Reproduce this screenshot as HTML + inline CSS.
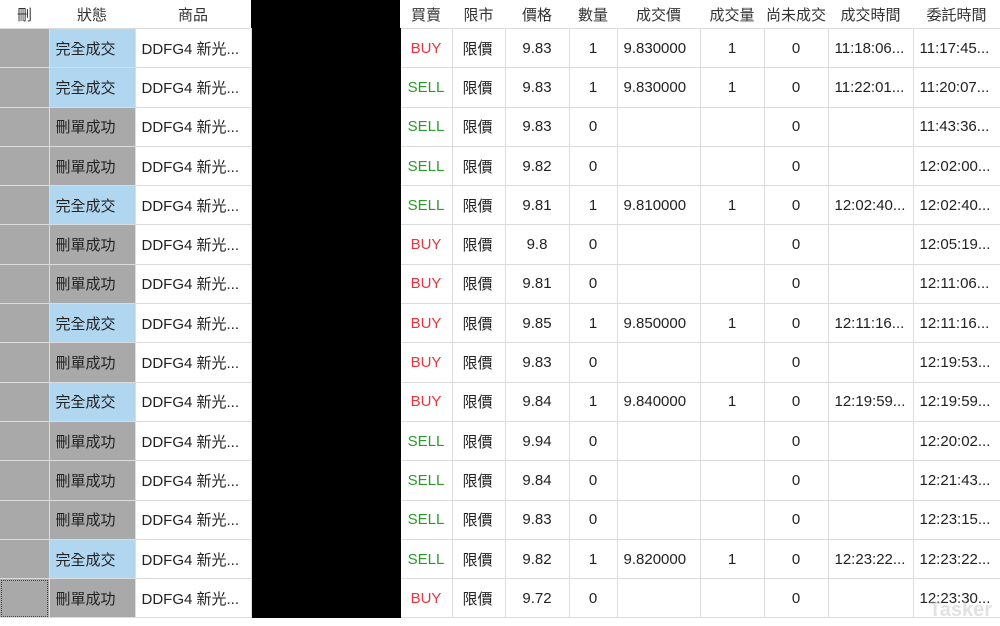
<!DOCTYPE html>
<html><head><meta charset="utf-8"><style>
body{margin:0;width:1000px;height:626px;overflow:hidden;background:#fff;font-family:"Liberation Sans","Noto Sans CJK TC",sans-serif;font-size:15px;color:#222;position:relative}
table{border-collapse:collapse;table-layout:fixed;position:absolute;left:0;top:0;width:1000px}
th{height:28px;font-weight:normal;text-align:center;padding:0;white-space:nowrap;overflow:hidden;color:#333;vertical-align:middle}
td{height:38.3px;border:1px solid #dcdcdc;padding:0 0 0 6px;white-space:nowrap;overflow:hidden;vertical-align:middle}
td.c{text-align:center;padding:0}
td.p{padding-left:10px}
td.g{background:#a9a9a9}
td.b{background:#b1d6f0}
td.k{background:#000;border-color:#000}
.buy{color:#f0303a}.sell{color:#2a9a2a}
tr td:first-child{border-left:none}
</style></head><body>
<table>
<colgroup><col style="width:49px"><col style="width:86px"><col style="width:116px"><col style="width:149px"><col style="width:52px"><col style="width:53px"><col style="width:64px"><col style="width:48px"><col style="width:83px"><col style="width:64px"><col style="width:64px"><col style="width:85px"><col style="width:87px"></colgroup>
<tr><th>刪</th><th>狀態</th><th>商品</th><th style="background:#000"></th><th>買賣</th><th>限市</th><th>價格</th><th>數量</th><th>成交價</th><th>成交量</th><th>尚未成交</th><th>成交時間</th><th>委託時間</th></tr>
<tr><td class="g"></td><td class="b">完全成交</td><td>DDFG4 新光...</td><td class="k"></td><td class="c buy">BUY</td><td class="p">限價</td><td class="c">9.83</td><td class="c">1</td><td>9.830000</td><td class="c">1</td><td class="c">0</td><td>11:18:06...</td><td>11:17:45...</td></tr>
<tr><td class="g"></td><td class="b">完全成交</td><td>DDFG4 新光...</td><td class="k"></td><td class="c sell">SELL</td><td class="p">限價</td><td class="c">9.83</td><td class="c">1</td><td>9.830000</td><td class="c">1</td><td class="c">0</td><td>11:22:01...</td><td>11:20:07...</td></tr>
<tr><td class="g"></td><td class="g">刪單成功</td><td>DDFG4 新光...</td><td class="k"></td><td class="c sell">SELL</td><td class="p">限價</td><td class="c">9.83</td><td class="c">0</td><td></td><td></td><td class="c">0</td><td></td><td>11:43:36...</td></tr>
<tr><td class="g"></td><td class="g">刪單成功</td><td>DDFG4 新光...</td><td class="k"></td><td class="c sell">SELL</td><td class="p">限價</td><td class="c">9.82</td><td class="c">0</td><td></td><td></td><td class="c">0</td><td></td><td>12:02:00...</td></tr>
<tr><td class="g"></td><td class="b">完全成交</td><td>DDFG4 新光...</td><td class="k"></td><td class="c sell">SELL</td><td class="p">限價</td><td class="c">9.81</td><td class="c">1</td><td>9.810000</td><td class="c">1</td><td class="c">0</td><td>12:02:40...</td><td>12:02:40...</td></tr>
<tr><td class="g"></td><td class="g">刪單成功</td><td>DDFG4 新光...</td><td class="k"></td><td class="c buy">BUY</td><td class="p">限價</td><td class="c">9.8</td><td class="c">0</td><td></td><td></td><td class="c">0</td><td></td><td>12:05:19...</td></tr>
<tr><td class="g"></td><td class="g">刪單成功</td><td>DDFG4 新光...</td><td class="k"></td><td class="c buy">BUY</td><td class="p">限價</td><td class="c">9.81</td><td class="c">0</td><td></td><td></td><td class="c">0</td><td></td><td>12:11:06...</td></tr>
<tr><td class="g"></td><td class="b">完全成交</td><td>DDFG4 新光...</td><td class="k"></td><td class="c buy">BUY</td><td class="p">限價</td><td class="c">9.85</td><td class="c">1</td><td>9.850000</td><td class="c">1</td><td class="c">0</td><td>12:11:16...</td><td>12:11:16...</td></tr>
<tr><td class="g"></td><td class="g">刪單成功</td><td>DDFG4 新光...</td><td class="k"></td><td class="c buy">BUY</td><td class="p">限價</td><td class="c">9.83</td><td class="c">0</td><td></td><td></td><td class="c">0</td><td></td><td>12:19:53...</td></tr>
<tr><td class="g"></td><td class="b">完全成交</td><td>DDFG4 新光...</td><td class="k"></td><td class="c buy">BUY</td><td class="p">限價</td><td class="c">9.84</td><td class="c">1</td><td>9.840000</td><td class="c">1</td><td class="c">0</td><td>12:19:59...</td><td>12:19:59...</td></tr>
<tr><td class="g"></td><td class="g">刪單成功</td><td>DDFG4 新光...</td><td class="k"></td><td class="c sell">SELL</td><td class="p">限價</td><td class="c">9.94</td><td class="c">0</td><td></td><td></td><td class="c">0</td><td></td><td>12:20:02...</td></tr>
<tr><td class="g"></td><td class="g">刪單成功</td><td>DDFG4 新光...</td><td class="k"></td><td class="c sell">SELL</td><td class="p">限價</td><td class="c">9.84</td><td class="c">0</td><td></td><td></td><td class="c">0</td><td></td><td>12:21:43...</td></tr>
<tr><td class="g"></td><td class="g">刪單成功</td><td>DDFG4 新光...</td><td class="k"></td><td class="c sell">SELL</td><td class="p">限價</td><td class="c">9.83</td><td class="c">0</td><td></td><td></td><td class="c">0</td><td></td><td>12:23:15...</td></tr>
<tr><td class="g"></td><td class="b">完全成交</td><td>DDFG4 新光...</td><td class="k"></td><td class="c sell">SELL</td><td class="p">限價</td><td class="c">9.82</td><td class="c">1</td><td>9.820000</td><td class="c">1</td><td class="c">0</td><td>12:23:22...</td><td>12:23:22...</td></tr>
<tr><td class="g" style="outline:1px dotted #444;outline-offset:-2px"></td><td class="g">刪單成功</td><td>DDFG4 新光...</td><td class="k"></td><td class="c buy">BUY</td><td class="p">限價</td><td class="c">9.72</td><td class="c">0</td><td></td><td></td><td class="c">0</td><td></td><td>12:23:30...</td></tr>
</table>
<div style="position:absolute;right:8px;bottom:4px;color:rgba(190,190,190,.45);font-size:20px;font-weight:bold">Tasker</div>
</body></html>
